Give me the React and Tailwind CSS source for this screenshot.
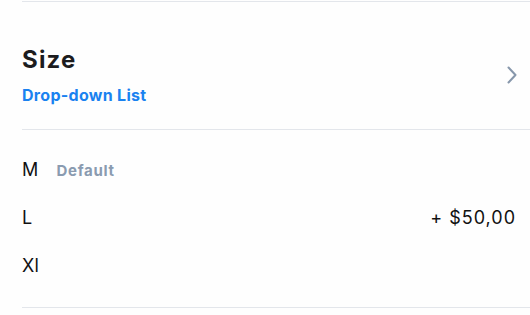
export default function App() {
  const options = [
    { label: "M", tag: "Default" },
    { label: "L", price: "+ $50,00" },
    { label: "Xl" },
  ];

  return (
    <div className="h-[315px] w-[530px] bg-[#fefefe] pl-[22px] pt-px font-['Inter',sans-serif] overflow-hidden">
      {/* header */}
      <div className="flex items-center justify-between border-y border-[#e3e6eb] pt-[43px] pb-[24px] pr-[12px]">
        <div>
          <h2 className="text-[24px] leading-[30px] font-bold tracking-[1.2px] text-[#1c1c1e]">Size</h2>
          <p className="mt-[10px] text-[16px] leading-[20px] font-bold tracking-[0.3px] text-[#1a82f0]">
            Drop-down List
          </p>
        </div>
        <svg width="12" height="18" viewBox="0 0 12 18" fill="none">
          <path
            d="M2.5 1.5L9.5 9L2.5 16.5"
            stroke="#8797ab"
            strokeWidth="2"
            strokeLinecap="round"
            strokeLinejoin="round"
          />
        </svg>
      </div>

      {/* options */}
      <div className="border-b border-[#e3e6eb] pt-[16px] pb-[17px] pr-[14px]">
        {options.map((opt) => (
          <div key={opt.label} className="h-12 flex items-center justify-between">
            <div className="flex items-baseline">
              <span className="text-[18px] leading-[24px] tracking-[0.3px] text-[#111111]">{opt.label}</span>
              {opt.tag && (
                <span className="ml-[18px] text-[15px] leading-[20px] font-bold tracking-[0.7px] text-[#8a9bb0]">
                  {opt.tag}
                </span>
              )}
            </div>
            {opt.price && (
              <span className="text-[18px] leading-[24px] tracking-[1px] text-[#111111]">{opt.price}</span>
            )}
          </div>
        ))}
      </div>
    </div>
  );
}
